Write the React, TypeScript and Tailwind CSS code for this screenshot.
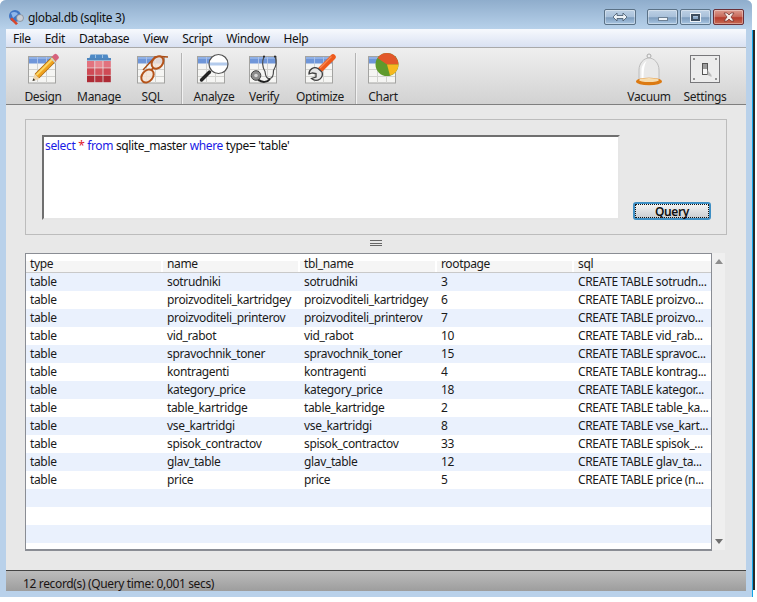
import type { ReactNode } from "react";

const uiFont = "font-['Noto_Sans','Open_Sans',sans-serif] tracking-[-0.35px]";

const rows = [
  ["table", "sotrudniki", "sotrudniki", "3", "CREATE TABLE sotrudn..."],
  ["table", "proizvoditeli_kartridgey", "proizvoditeli_kartridgey", "6", "CREATE TABLE proizvo..."],
  ["table", "proizvoditeli_printerov", "proizvoditeli_printerov", "7", "CREATE TABLE proizvo..."],
  ["table", "vid_rabot", "vid_rabot", "10", "CREATE TABLE vid_rab..."],
  ["table", "spravochnik_toner", "spravochnik_toner", "15", "CREATE TABLE spravoc..."],
  ["table", "kontragenti", "kontragenti", "4", "CREATE TABLE kontrag..."],
  ["table", "kategory_price", "kategory_price", "18", "CREATE TABLE kategor..."],
  ["table", "table_kartridge", "table_kartridge", "2", "CREATE TABLE table_ka..."],
  ["table", "vse_kartridgi", "vse_kartridgi", "8", "CREATE TABLE vse_kart..."],
  ["table", "spisok_contractov", "spisok_contractov", "33", "CREATE TABLE spisok_..."],
  ["table", "glav_table", "glav_table", "12", "CREATE TABLE glav_ta..."],
  ["table", "price", "price", "5", "CREATE TABLE price (n..."],
];

const menus = ["File", "Edit", "Database", "View", "Script", "Window", "Help"];
const columns = ["type", "name", "tbl_name", "rootpage", "sql"];

// sheet with blue header, shared by most toolbar icons
function Sheet({ children }: { children?: ReactNode }) {
  return (
    <svg width="34" height="32" viewBox="0 0 34 32" className="overflow-visible">
      <rect x="2.500" y="3.500" width="27" height="26.500" fill="#f5f5f3" stroke="#a3a3a1" />
      <rect x="3" y="4" width="26" height="6.500" fill="#6f96d9" />
      <path d="M3 4h26v2H3z" fill="#8fb0e6" />
      <path d="M11.500 10v20M20.500 10v20M3 16.500h26M3 23.500h26" stroke="#d2d2cf" strokeWidth="1" />
      <path d="M11.500 4v6.500M20.500 4v6.500" stroke="#a9c0e8" strokeWidth="1" />
      {children}
    </svg>
  );
}

function DesignIcon() {
  return (
    <Sheet>
      <path d="M11 23L28 6" stroke="#a8650e" strokeWidth="6.400" />
      <path d="M11 23L28 6" stroke="#f0a21e" strokeWidth="5" />
      <path d="M10.500 22L27 5.500" stroke="#fbd765" strokeWidth="1.800" />
      <path d="M25.800 3.800l2.300-2.300a2 2 0 0 1 2.800 0l1.400 1.400a2 2 0 0 1 0 2.800l-2.300 2.300z" fill="#d6617c" />
      <path d="M24.800 4.800l5.400 5.400" stroke="#cfcfcf" strokeWidth="1.500" />
      <path d="M6.500 28l2-7 5 5z" fill="#efd5aa" />
      <path d="M6.500 28l.8-2.800 2 2z" fill="#333" />
    </Sheet>
  );
}

function ManageIcon() {
  const reds = ["#e2727e", "#e8868f", "#e2727e", "#cf4a55", "#d4565f", "#cf4a55", "#ae2b35", "#b5323c", "#ae2b35"];
  return (
    <svg width="32" height="32" viewBox="0 0 32 32">
      <path d="M6.500 5l1-3.500h17l1 3.500z" fill="#4e8ac6" />
      <path d="M12.500 1.500v3.500M19.500 1.500v3.500" stroke="#9cc0e2" />
      <rect x="4" y="5" width="24" height="2.500" fill="#4f86bd" />
      {reds.map((c, i) => (
        <rect key={i} x={4 + (i % 3) * 8.2} y={8 + Math.floor(i / 3) * 7.300} width="7.400" height="6.600" fill={c} />
      ))}
    </svg>
  );
}

function SqlIcon() {
  return (
    <Sheet>
      <path d="M8 17L20 4l6-.5 7 .5" fill="none" stroke="#a84c14" strokeWidth="1.400" />
      <ellipse cx="12.500" cy="23" rx="7.200" ry="5.400" transform="rotate(-50 12.500 23)" fill="#f3e3d6" fillOpacity=".85" stroke="#b4531a" strokeWidth="2" />
      <ellipse cx="22.500" cy="9.500" rx="6.800" ry="5.200" transform="rotate(-50 22.500 9.500)" fill="#f3e3d6" fillOpacity=".85" stroke="#b4531a" strokeWidth="2" />
      <path d="M16.500 17l1.500-2" stroke="#b4531a" strokeWidth="1.800" />
    </Sheet>
  );
}

function AnalyzeIcon() {
  return (
    <Sheet>
      <path d="M6.500 27L14.500 19" stroke="#222" strokeWidth="3.400" strokeLinecap="round" />
      <circle cx="23.500" cy="11" r="9.500" fill="#fff" />
      <path d="M14.200 9.500h18.600a9.500 9.500 0 0 1 .2 3H14a9.500 9.500 0 0 1 .2-3z" fill="#b4cbec" />
      <circle cx="23.500" cy="11" r="9.500" fill="none" stroke="#555" strokeWidth="1.200" />
    </Sheet>
  );
}

function VerifyIcon() {
  return (
    <Sheet>
      <path d="M17 3.500c-2 5-2 10 1 15 .5 5 2 7.500 5 7 3-.5 3.500-4 3.500-8 2.500-4 3.500-9 1.500-14" fill="none" stroke="#4a4a4a" strokeWidth="1.200" />
      <path d="M23 26c-2.500 3.500-8 4-12 .5" fill="none" stroke="#222" strokeWidth="2" />
      <circle cx="9" cy="22.500" r="4.800" fill="#8c8c8c" stroke="#444" />
      <circle cx="9" cy="22.500" r="1.800" fill="#d8d8d8" />
      <circle cx="17" cy="3.500" r="1" fill="#222" />
      <circle cx="28" cy="3.500" r="1" fill="#222" />
    </Sheet>
  );
}

function OptimizeIcon() {
  return (
    <Sheet>
      <path d="M15 19L30 4" stroke="#ee5a1c" strokeWidth="5.500" strokeLinecap="round" />
      <path d="M17 15L28.500 3.500" stroke="#f58a55" strokeWidth="1.200" />
      <path d="M6 21a6 6 0 0 1 9-5.500l4 3.500a6.500 6.500 0 0 1-2 7 7 7 0 0 1-8.500-.5l4.500-1.500v-3.500L9.500 20z" fill="#e6e6e6" stroke="#3f3f3f" strokeWidth="1.300" />
    </Sheet>
  );
}

function ChartIcon() {
  return (
    <Sheet>
      <circle cx="21" cy="11.500" r="11.500" fill="#5f9a2c" />
      <path d="M21 11.500L11.500 5A11.500 11.500 0 0 1 32.500 11.500z" fill="#e2572a" />
      <path d="M21 11.500h11.500A11.500 11.500 0 0 1 24 22.600z" fill="#f7b81f" />
    </Sheet>
  );
}

function VacuumIcon() {
  return (
    <svg width="32" height="34" viewBox="0 0 32 34">
      <circle cx="16" cy="3" r="2" fill="#eee" stroke="#aaa" />
      <path d="M6 28V17C6 10 11 5 16 5s10 5 10 12v11z" fill="#e9e9e9" stroke="#bcbcbc" />
      <path d="M8.500 27V17c0-4 3-8 5-9-2 4-3 8-3 19z" fill="#fff" />
      <ellipse cx="16" cy="28.500" rx="13" ry="3.800" fill="#dc7a12" />
      <ellipse cx="16" cy="27" rx="10" ry="2" fill="#f6dcae" />
    </svg>
  );
}

function SettingsIcon() {
  return (
    <svg width="32" height="32" viewBox="0 0 32 32">
      <rect x="1.500" y="2.500" width="29" height="27" fill="#ececec" stroke="#77777a" />
      {[[5, 6], [27, 6], [5, 26], [27, 26]].map(([x, y]) => (
        <circle key={x + "-" + y} cx={x} cy={y} r="1" fill="#777" />
      ))}
      <rect x="13.500" y="10.500" width="5" height="11" fill="#f6f6f6" stroke="#555" />
      <rect x="14" y="11" width="4" height="5" fill="#9b9b9b" />
      <path d="M18.500 17l4 5v2l-4-2z" fill="#bbb" />
    </svg>
  );
}

function AppIcon() {
  return (
    <svg width="17" height="17" viewBox="0 0 17 17">
      <circle cx="7" cy="7" r="6" fill="#3f74c4" />
      <path d="M3 4c3-2 6-1 7 1L5 9z" fill="#8fb6ea" />
      <circle cx="12" cy="9" r="3.500" fill="#c9ced6" stroke="#7b828c" strokeWidth=".7" />
      <path d="M2 10l6 6 2-1.500L4 8.500z" fill="#d9472b" />
    </svg>
  );
}

function ToolButton({ label, width, children }: { label: string; width: string; children: ReactNode }) {
  return (
    <div className={`${width} flex flex-col items-center`}>
      <div className="h-[36px] flex items-start justify-center">{children}</div>
      <span className="text-[12px] leading-[16px] text-[#1c1c1c] whitespace-nowrap">{label}</span>
    </div>
  );
}

function ToolSeparator({ className }: { className: string }) {
  return <div className={`${className} w-[2px] h-[51px] bg-[linear-gradient(to_right,#b4b4b4_50%,#f2f2f2_50%)]`} />;
}

function CaptionButton({ width, className, children }: { width: string; className: string; children: ReactNode }) {
  return (
    <div className={`${width} h-[16px] rounded-[2px] border border-[#5a7186] flex items-center justify-center shadow-[inset_0_0_0_1px_rgba(255,255,255,0.35)] ${className}`}>
      {children}
    </div>
  );
}

const captionBlue = "bg-[linear-gradient(to_bottom,#bdd0e4_0%,#a8c0da_50%,#7d9cbd_55%,#a9c6e2_100%)]";

export default function App() {
  return (
    <div className={`${uiFont} w-[755px] h-[597px] flex`}>
      <div className="w-[752px] h-full bg-[#b9d1ea] rounded-t-[6px] overflow-hidden flex flex-col">
        {/* title bar */}
        <div className="h-[29px] shrink-0 bg-[linear-gradient(to_bottom,#8fadcc,#b7d1ea)] flex items-start pl-[8px] pr-[8px] pt-[9px]">
          <AppIcon />
          <span className="ml-[3px] text-[12px] leading-[18px] text-[#101010]">global.db (sqlite 3)</span>
          <div className="ml-auto flex">
            <CaptionButton width="w-[32px]" className={`${captionBlue} mr-[11px]`}>
              <svg width="16" height="10" viewBox="0 0 16 10">
                <path d="M1 5l4-4v2.500h6V1l4 4-4 4V6.500H5V9z" fill="#eef3f8" stroke="#44566a" strokeWidth=".8" />
              </svg>
            </CaptionButton>
            <CaptionButton width="w-[31px]" className={`${captionBlue} mr-[2px]`}>
              <div className="w-[10px] h-[4px] mt-[4px] bg-[#eef3f8] border border-[#6c7f93]" />
            </CaptionButton>
            <CaptionButton width="w-[31px]" className={`${captionBlue} mr-[2px]`}>
              <div className="w-[9px] h-[7px] bg-transparent border-2 border-[#3d4d5f] outline outline-[#eef3f8]" />
            </CaptionButton>
            <CaptionButton width="w-[31px]" className="bg-[linear-gradient(to_bottom,#dd9d90_0%,#c7695a_48%,#b63c2c_55%,#c56a55_100%)] border-[#6a3038]">
              <svg width="12" height="10" viewBox="0 0 12 10">
                <path d="M1 1h3l2 2 2-2h3L8 5l3 4H8L6 7 4 9H1l3-4z" fill="#f4ece8" stroke="#6d2d2a" strokeWidth=".7" />
              </svg>
            </CaptionButton>
          </div>
        </div>

        <div className="flex-1 min-h-0 flex flex-col ml-[6px] mr-[6px] mb-[6px] bg-[#e8e8e8]">
          {/* menu bar */}
          <div className="h-[18px] shrink-0 bg-[linear-gradient(to_bottom,#f7f9fd,#d9e1f2)] flex items-center gap-[14px] pl-[7px] pt-[2px] text-[12px] leading-[16px] text-[#101010]">
            {menus.map((m) => (
              <span key={m}>{m}</span>
            ))}
          </div>

          {/* toolbar */}
          <div className="h-[58px] shrink-0 border-t border-t-[#a9a9a9] border-b border-b-[#7f7f7f] bg-[linear-gradient(to_bottom,#efefef,#d2d2d2)] flex items-start pl-[9px] pt-[5px]">
            <ToolButton label="Design" width="w-[56px]"><DesignIcon /></ToolButton>
            <ToolButton label="Manage" width="w-[56px]"><ManageIcon /></ToolButton>
            <ToolButton label="SQL" width="w-[50px]"><SqlIcon /></ToolButton>
            <ToolSeparator className="ml-[4px] mr-[4px]" />
            <ToolButton label="Analyze" width="w-[54px]"><div className="mr-[4px]"><AnalyzeIcon /></div></ToolButton>
            <ToolButton label="Verify" width="w-[46px]"><VerifyIcon /></ToolButton>
            <ToolButton label="Optimize" width="w-[66px]"><OptimizeIcon /></ToolButton>
            <ToolSeparator className="ml-[2px]" />
            <ToolButton label="Chart" width="w-[52px]"><ChartIcon /></ToolButton>
            <div className="ml-auto mr-[13px] flex">
              <ToolButton label="Vacuum" width="w-[56px]"><VacuumIcon /></ToolButton>
              <ToolButton label="Settings" width="w-[56px]"><SettingsIcon /></ToolButton>
            </div>
          </div>

          {/* query panel */}
          <div className="mt-[14px] mx-[19px] h-[116px] shrink-0 border border-[#bcbcbc] pl-[16px] pt-[15px] flex items-start">
            <div className="w-[578px] h-[85px] bg-white border-2 border-t-[#6f6f6f] border-l-[#6f6f6f] border-r-[#e6e6e6] border-b-[#e6e6e6] pl-[1px] pt-[1px] text-[12px] leading-[16px] whitespace-pre">
              <span className="text-[#1a1ae6]">select</span>
              <span className="text-[#e0202a]"> * </span>
              <span className="text-[#1a1ae6]">from</span>
              <span className="text-[#111]"> sqlite_master </span>
              <span className="text-[#1a1ae6]">where</span>
              <span className="text-[#111]"> type= 'table'</span>
            </div>
            <button className="mt-[67px] ml-[13px] w-[78px] h-[18px] rounded-[3px] border-2 border-[#3f8fc4] bg-[linear-gradient(to_bottom,#f4f4f4,#c9ccd0)] outline-1 outline-dotted outline-[#111] -outline-offset-3 flex items-center justify-center pt-[2px] text-[12px] leading-[14px] font-semibold text-[#101010]">
              Query
            </button>
          </div>

          {/* splitter */}
          <div className="h-[18px] shrink-0 flex items-center justify-center pb-[2px]">
            <div className="w-[12px] h-[6px] border-y border-[#666] flex items-center">
              <div className="w-full h-[1px] bg-[#666]" />
            </div>
          </div>

          {/* results */}
          <div className="mx-[19px] flex h-[298px] shrink-0">
            <div className="w-[687px] border-x border-b-2 border-[#8a8d94] bg-white overflow-hidden">
              <div className="border-t border-[#8a8d94]" />
              <div className="h-[19px] flex border-b border-[#c9c9c9] bg-[linear-gradient(to_bottom,#ffffff_40%,#f5f5f5_40%)] text-[12px] leading-[19px] text-[#1a1a1a]">
                {columns.map((c) => (
                  <div key={c} className="w-[137px] shrink-0 pl-[4px] border-r-2 border-white last:border-r-0">{c}</div>
                ))}
              </div>
              {Array.from({ length: 16 }).map((_, i) => (
                <div key={i} className={`h-[18px] flex text-[12px] leading-[18px] text-[#1a1a1a] ${i % 2 === 0 ? "bg-[#eaf1fd]" : "bg-white"}`}>
                  {(rows[i] ?? []).map((cell, j) => (
                    <div key={j} className="w-[137px] shrink-0 pl-[4px] whitespace-nowrap">{cell}</div>
                  ))}
                </div>
              ))}
            </div>
            <div className="w-[13px] bg-[#efefef] flex flex-col items-center justify-between py-[6px] h-[297px]">
              <svg width="8" height="5" viewBox="0 0 8 5"><path d="M4 0l4 5H0z" fill="#8d8d8d" /></svg>
              <svg width="8" height="5" viewBox="0 0 8 5"><path d="M4 5L0 0h8z" fill="#6f6f6f" /></svg>
            </div>
          </div>

          {/* status bar */}
          <div className="mt-auto h-[21px] shrink-0 border-t border-[#444] bg-[linear-gradient(to_bottom,#bcbcbc,#9d9d9d)] pl-[17px] text-[12px] leading-[25px] text-[#1a1414]">
            12 record(s) (Query time: 0,001 secs)
          </div>
        </div>
      </div>
      {/* desktop behind the window */}
      <div className="mt-[30px] w-[1px] bg-[#12a5e8]" />
      <div className="mt-[30px] w-[2px] h-[560px] bg-[#2a2a2a]" />
    </div>
  );
}
